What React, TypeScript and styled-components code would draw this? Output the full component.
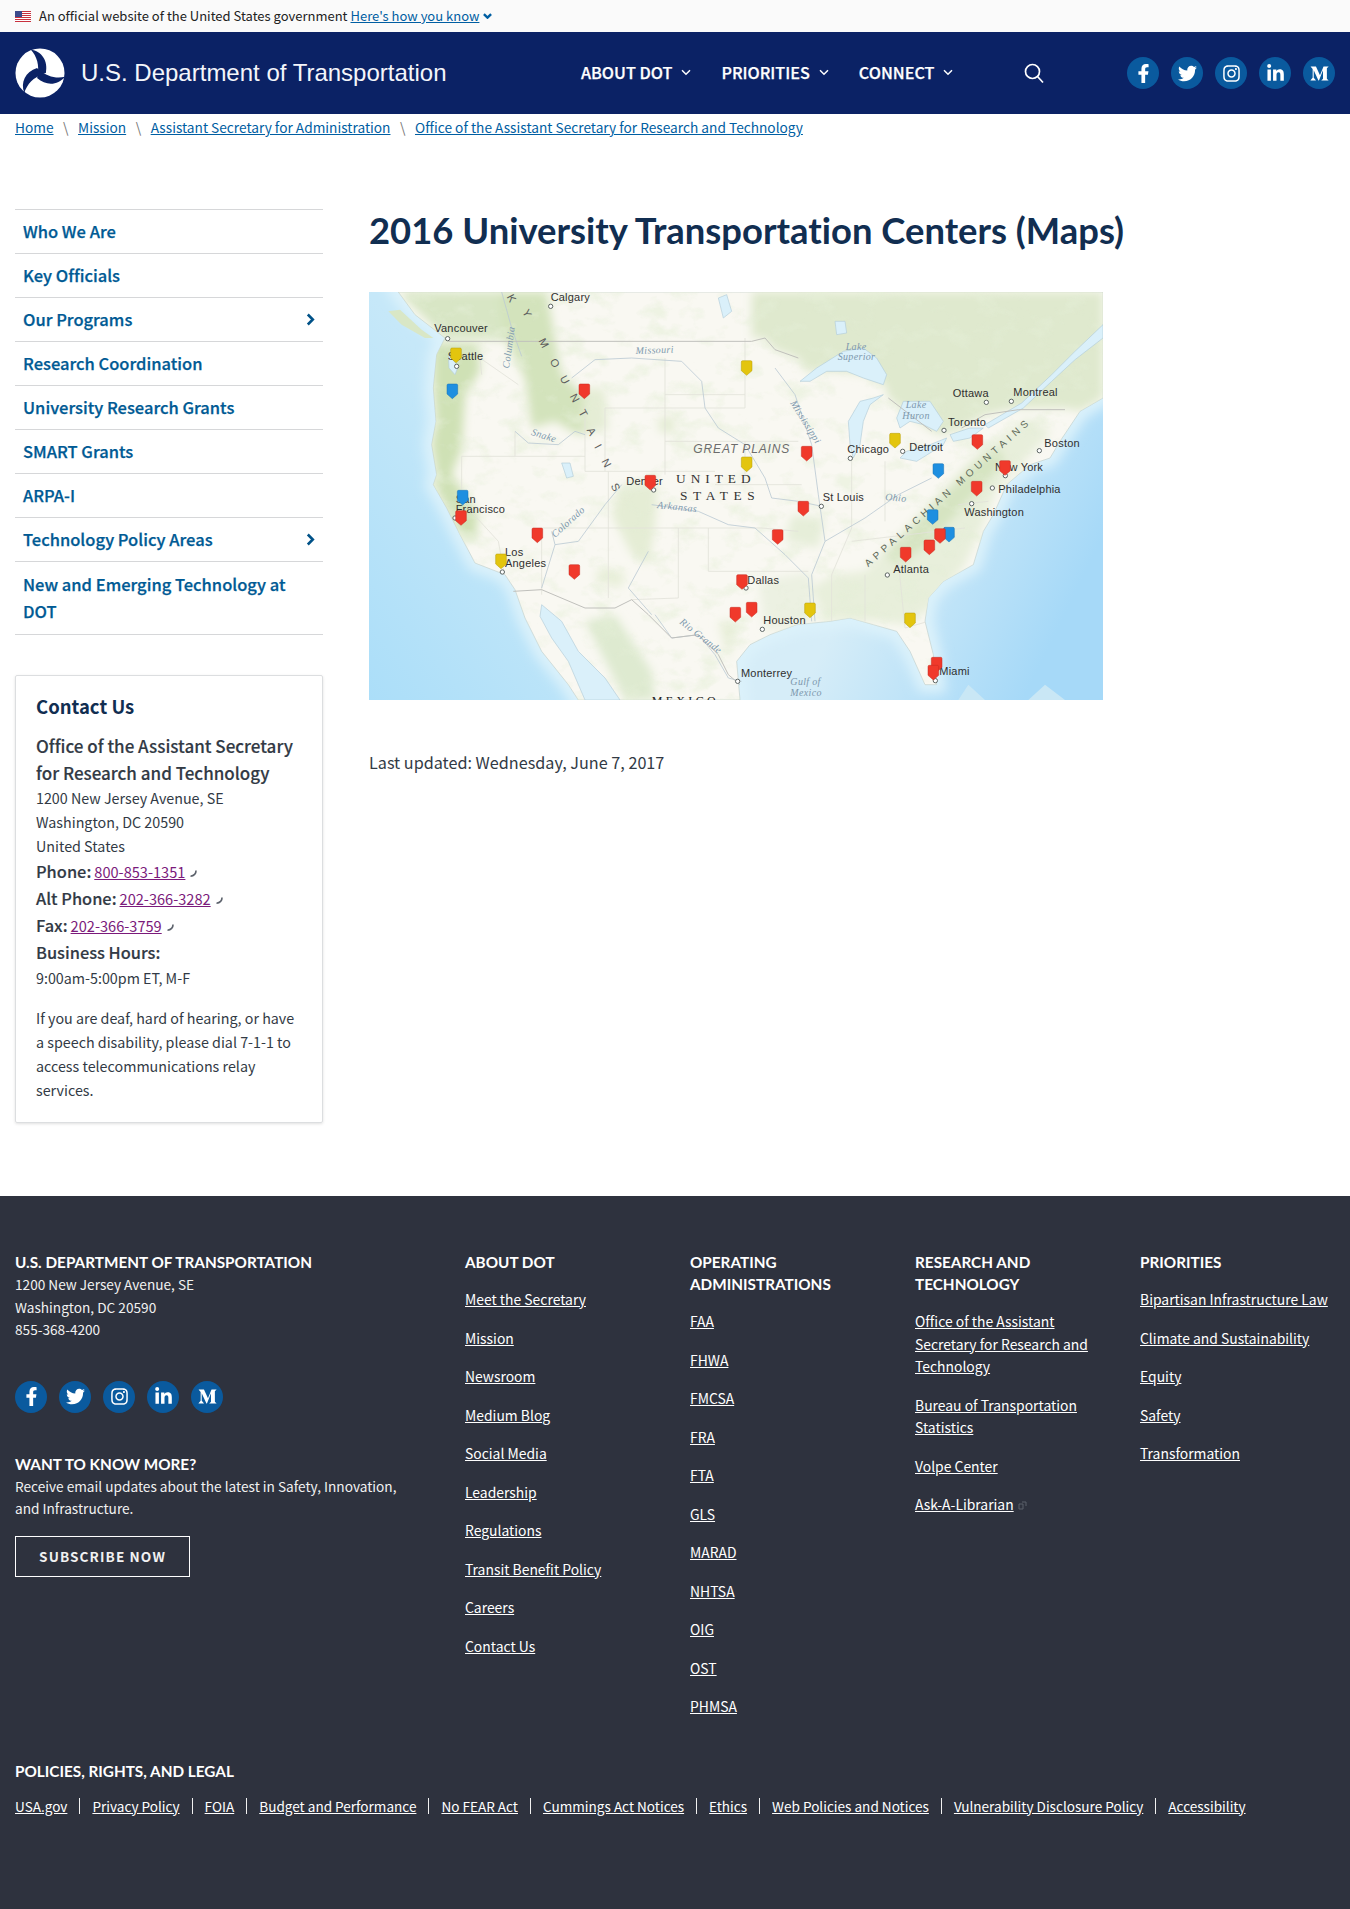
import React from "react";
import styled, { createGlobalStyle } from "styled-components";
import { FaFacebookF, FaTwitter, FaInstagram, FaLinkedinIn, FaMediumM } from "react-icons/fa";

const SANS = `"Noto Sans CJK SC", "Source Sans Pro", "Noto Sans", sans-serif`;
const LATO = `Lato, "Liberation Sans", sans-serif`;

const Global = createGlobalStyle`
  html, body { margin: 0; padding: 0; background: #fff; }
  body { font-family: ${SANS}; color: #323a45; font-variant-ligatures: none; }
  ul { margin: 0; padding: 0; list-style: none; }
  * { box-sizing: border-box; }
`;

const Banner = styled.div`
  height: 32px; background: #fafafa; display: flex; align-items: center;
  padding: 0 15px; font-size: 13px; color: #212121; gap: 8px; line-height: 32px;
`;
const BannerLink = styled.a`
  color: #005ea2; text-decoration: underline; display: inline-flex; align-items: center; gap: 4px; margin-left: -5px;
`;
const Header = styled.header`
  height: 82px; background: #0b2265; display: flex; align-items: center; padding: 0 15px; color: #fff;
`;
const Brand = styled.div`
  display: flex; align-items: center; gap: 16px; width: 566px; flex: none;
`;
const BrandName = styled.span`
  font-family: "Liberation Sans", Arial, sans-serif; font-size: 24px; white-space: nowrap; color: #f4f6fb;
`;
const Nav = styled.nav`
  display: flex; width: 442px; flex: none; gap: 30px; align-items: center; padding-bottom: 2px;
`;
const NavItem = styled.a`
  font-size: 16.2px; font-weight: 500; -webkit-text-stroke: 0.25px #fff; text-transform: uppercase; color: #fff; display: inline-flex; align-items: center; gap: 9px; white-space: nowrap;
`;
const SearchBox = styled.div`
  width: 104px; flex: none; display: flex;
`;
const SocialRow = styled.div`
  display: flex; gap: 12px;
`;
const SocialBtn = styled.a`
  width: 32px; height: 32px; border-radius: 50%; background: #0a5a9e; color: #fff; display: flex; align-items: center; justify-content: center; font-size: 19px;
`;
const Crumbs = styled.div`
  height: 27px; padding: 0 15px; display: flex; align-items: center; font-size: 13.7px; line-height: 27px;
`;
const CrumbLink = styled.a`
  color: #005ea2; text-decoration: underline;
`;
const CrumbSep = styled.span`
  color: #777; margin: 0 9.5px; font-size: 14px;
`;
const Layout = styled.div`
  display: flex; padding: 68px 15px 0; align-items: flex-start;
`;
const Side = styled.aside`
  width: 308px; flex: none;
`;
const SideList = styled.ul`
  border-bottom: 1px solid #d6d7d9;
`;
const SideItem = styled.li<{ $tall?: boolean }>`
  border-top: 1px solid #d6d7d9; min-height: ${(p) => (p.$tall ? "73px" : "44px")}; display: flex; align-items: center; justify-content: space-between;
  padding: 0 8px; font-size: 16.5px; font-weight: 500; -webkit-text-stroke: 0.25px #005a94; line-height: 27px; color: #005a94;
`;
const Card = styled.div`
  margin-top: 40px; border: 1px solid #dcdee0; border-radius: 2px; box-shadow: 0 1px 3px rgba(0, 0, 0, 0.12); padding: 17px 20px 18px; height: 448px;
`;
const CardTitle = styled.h3`
  margin: 0 0 13px; font-size: 18.5px; line-height: 26px; font-weight: 700; color: #112e51;
`;
const CardOrg = styled.div`
  font-size: 17px; line-height: 27px; font-weight: 500; -webkit-text-stroke: 0.15px #323a45;
`;
const CardText = styled.div`
  font-size: 14.3px; line-height: 24px;
`;
const CardLine = styled.div`
  font-size: 16.4px; line-height: 27px; font-weight: 500; -webkit-text-stroke: 0.15px #323a45; white-space: nowrap; display: flex; align-items: baseline; gap: 3px;
`;
const Phone = styled.a`
  font-size: 14.6px; font-weight: 400; -webkit-text-stroke: 0; color: #7b1a7b; text-decoration: underline;
`;
const CardNote = styled.p`
  margin: 16px 0 0; font-size: 14.3px; line-height: 24px;
`;
const Main = styled.main`
  margin-left: 46px; flex: 1; min-width: 0;
`;
const Title = styled.h1`
  margin: 0; font-family: ${LATO}; font-weight: 700; font-size: 36.4px; line-height: 42px; color: #112e51; white-space: nowrap;
`;
const MapFrame = styled.svg`
  display: block; width: 734px; height: 408px; margin-top: 41px;
`;
const Updated = styled.p`
  margin: 49px 0 0; font-size: 16.2px; line-height: 27px; color: #323a45;
`;
const Footer = styled.footer`
  margin-top: 73px; background: #2e323e; color: #f1f1f1; padding: 55px 15px 95px;
`;
const FooterCols = styled.div`
  display: flex; align-items: flex-start;
`;
const FooterLead = styled.div`
  width: 450px; flex: none; font-size: 13.65px; line-height: 22.5px;
`;
const FooterCol = styled.div`
  width: 225px; flex: none; padding-right: 28px; font-size: 13.9px; line-height: 22.5px;
`;
const FooterHead = styled.h4`
  margin: 0; font-family: ${LATO}; font-weight: 700; font-size: 15.3px; line-height: 22px; color: #fff; text-transform: uppercase;
`;
const FooterSocial = styled(SocialRow)`
  margin-top: 40px;
`;
const WantHead = styled(FooterHead)`
  margin-top: 40px;
`;
const WantText = styled.div`
  width: 400px;
`;
const Subscribe = styled.a`
  display: flex; width: 175px; height: 41px; margin-top: 16px; border: 1px solid #fff; align-items: center; justify-content: center;
  font-weight: 700; font-size: 13.6px; letter-spacing: 1.1px; color: #f1f1f1; text-transform: uppercase;
`;
const LinkList = styled.ul`
  margin-top: 15px;
`;
const LinkItem = styled.li`
  margin-bottom: 16px;
`;
const FootLink = styled.a`
  color: #fff; text-decoration: underline;
`;
const Legal = styled.div`
  margin-top: 26px;
`;
const LegalRow = styled.ul`
  display: flex; margin-top: 13px; font-size: 13.57px; line-height: 22px;
`;
const LegalItem = styled.li`
  padding-right: 12px; margin-right: 12px; border-right: 1px solid #f1f1f1; line-height: 16px; height: 16px; margin-top: 3px; white-space: nowrap;
  &:last-child { border-right: none; }
`;

/* ---------- small drawings ---------- */
const Flag = () => (
  <svg width="16" height="11" viewBox="0 0 16 11" aria-hidden>
    <rect width="16" height="11" fill="#fff" />
    {[0, 2, 4, 6, 8, 10].map((y) => (
      <rect key={y} y={y} width="16" height="1" fill="#c8313e" />
    ))}
    <rect width="7" height="6" fill="#3c4a8c" />
  </svg>
);
const SmallChevron = ({ color = "#fff", size = 10, width = 1.5 }: { color?: string; size?: number; width?: number }) => (
  <svg width={size} height={size * 0.7} viewBox="0 0 10 7" aria-hidden>
    <path d="M1 1.2 L5 5.2 L9 1.2" fill="none" stroke={color} strokeWidth={width} />
  </svg>
);
const SideChevron = () => (
  <svg width="9" height="13" viewBox="0 0 9 13" aria-hidden>
    <path d="M1.8 1.5 L6.8 6.5 L1.8 11.5" fill="none" stroke="#005288" strokeWidth="2.6" />
  </svg>
);
const PhoneGlyph = () => (
  <svg width="9" height="9" viewBox="0 0 9 9" aria-hidden style={{ marginLeft: 1 }}>
    <path d="M7 1.5 C7.2 4.5 5 7 1.5 7.2" fill="none" stroke="#5b616b" strokeWidth="1.6" />
  </svg>
);
const ExternalGlyph = () => (
  <svg width="9" height="9" viewBox="0 0 9 9" aria-hidden style={{ marginLeft: 4 }}>
    <path d="M1 3 H5 V8 H1 Z M4 1 H8 V5" fill="none" stroke="#5b616b" strokeWidth="1" />
  </svg>
);
const SearchGlyph = () => (
  <svg width="22" height="22" viewBox="0 0 22 22" aria-hidden>
    <circle cx="9.5" cy="9.5" r="7" fill="none" stroke="#fff" strokeWidth="1.7" />
    <path d="M14.5 14.5 L20 20.5" stroke="#fff" strokeWidth="1.7" />
  </svg>
);
const Logo = () => (
  <svg width="50" height="50" viewBox="-102 -102 204 204" aria-hidden>
    <circle r="100" fill="#fff" />
    {[0, 120, 240].map((a) => (
      <path key={a} transform={`rotate(${a})`} d="M-38,-96 C8,-88 34,-50 24,0 L-10,8 C-2,-30 -12,-68 -38,-96 Z" fill="#0b2265" />
    ))}
  </svg>
);
const Socials = () => (
  <>
    <SocialBtn><FaFacebookF /></SocialBtn>
    <SocialBtn><FaTwitter /></SocialBtn>
    <SocialBtn><FaInstagram /></SocialBtn>
    <SocialBtn><FaLinkedinIn /></SocialBtn>
    <SocialBtn><FaMediumM /></SocialBtn>
  </>
);

/* ---------- map ---------- */
const LAND =
  "M100,12 L150,80 L240,150 L215,200 L205,300 L213,400 L200,470 L215,560 L205,590 L245,660 L285,740 L330,825 L420,860 L450,905 L480,990 L530,1090 L610,1190 L640,1236 L1125,1236 L1115,1120 L1155,1070 L1215,1040 L1295,1010 L1395,1000 L1455,990 L1525,1010 L1595,1030 L1635,1090 L1680,1190 L1715,1190 L1705,1100 L1680,1000 L1690,930 L1735,880 L1825,830 L1855,730 L1885,680 L1925,590 L1995,530 L2055,510 L2085,460 L2145,370 L2214,330 L2214,12 Z";

type Pin = [number, number, "r" | "y" | "b"];
const PINS: Pin[] = [
  [273, 180, "y"], [262, 288, "b"], [658, 288, "r"], [293, 607, "b"], [288, 668, "r"], [517, 720, "r"], [408, 798, "y"], [628, 830, "r"],
  [856, 562, "r"], [1131, 860, "r"], [1111, 958, "r"], [1160, 943, "r"], [1145, 218, "y"], [1145, 507, "y"], [1325, 475, "r"], [1315, 640, "r"],
  [1238, 725, "r"], [1335, 945, "y"], [1590, 436, "y"], [1635, 975, "y"], [1720, 527, "b"], [1703, 665, "b"], [1752, 718, "b"], [1725, 722, "r"],
  [1693, 756, "r"], [1622, 778, "r"], [1837, 440, "r"], [1920, 518, "r"], [1835, 580, "r"], [1715, 1108, "r"], [1705, 1132, "r"],
];
const PIN_COL = { r: ["#f0392b", "#c42a20"], y: ["#e3c50e", "#b59c08"], b: ["#1e8fe0", "#1670b5"] };

const CITIES: [string, number, number, number, number][] = [
  ["Calgary", 557, 40, 557, 55], ["Vancouver", 208, 132, 248, 152], ["Seattle", 248, 217, 275, 235], ["San", 272, 645, 270, 690],
  ["Denver", 784, 590, 866, 606], ["Angeles", 420, 836, 412, 852], ["Monterrey", 1128, 1167, 1118, 1180], ["Dallas", 1147, 888, 1143, 900],
  ["Houston", 1195, 1007, 1192, 1024], ["St Louis", 1373, 638, 1369, 655], ["Chicago", 1447, 495, 1456, 511], ["Detroit", 1633, 490, 1613, 490],
  ["Ottawa", 1763, 326, 1864, 343], ["Montreal", 1945, 323, 1939, 340], ["Toronto", 1749, 413, 1737, 427], ["Boston", 2038, 476, 2023, 488],
  ["New York", 1890, 548, 1921, 563], ["Philadelphia", 1900, 614, 1882, 600], ["Washington", 1798, 683, 1820, 647], ["Atlanta", 1585, 855, 1567, 861],
  ["Miami", 1723, 1160, 1711, 1178],
];
const ROCKY: [string, number, number][] = [
  ["K", 440, 30], ["Y", 487, 75], ["M", 537, 165], ["O", 570, 225], ["U", 600, 275], ["N", 630, 330], ["T", 655, 375], ["A", 680, 430], ["I", 700, 475], ["N", 725, 525], ["S", 752, 597],
];
const RIVERS: [string, number, number, number][] = [
  ["Missouri", 812, 198, -2], ["Snake", 497, 440, 18], ["Columbia", 432, 242, -82], ["Colorado", 570, 750, -42], ["Arkansas", 876, 660, 6],
  ["Rio Grande", 942, 1005, 38], ["Mississippi", 1275, 345, 58], ["Ohio", 1560, 636, 5],
];
const WATER_LABELS: [string, number, number][] = [
  ["Lake", 1442, 186], ["Superior", 1418, 216], ["Lake", 1622, 360], ["Huron", 1612, 392], ["Gulf of", 1276, 1192], ["Mexico", 1276, 1224],
];
const BORDERS = [
  "M250,160 L1160,160 L1200,150 L1230,185 L1300,210",
  "M1570,330 L1700,430 M1790,420 L1860,380 L1960,365 L2100,365",
  "M445,910 L530,905 L660,960 L750,960 L800,935 L850,980 L920,1050 L1000,1040 L1060,1100 L1090,1160 L1125,1190",
];
const STATES =
  "M350,260 L345,210 L460,290 M450,430 L450,505 L290,505 M290,505 L290,640 L400,760 L420,870 M450,505 L660,505 M660,355 L660,550 L720,550 L720,360 M720,360 L1140,360 M900,210 L900,560 M720,550 L1050,550 M1140,150 L1140,360 M900,320 L1140,320 M900,460 L1300,460 M1140,460 L1140,560 M730,720 L1190,720 L1300,730 M730,550 L730,930 M530,720 L730,720 M530,720 L530,920 M940,720 L940,930 L800,935 M1030,720 L1030,850 L1330,850 M1310,590 L1050,590 M1460,510 L1460,720 L1400,860 M1560,520 L1560,700 M1460,760 L1800,720 M1400,860 L1400,1000 M1500,860 L1500,1000 M1600,820 L1620,1020 M1620,1020 L1690,1000 M1780,650 L1870,640";
const LINES = [
  "M620,270 L690,215 L800,210 L950,220 L1010,280 L1020,360 L1060,420 L1140,470 L1200,570 L1220,630 L1300,640 L1370,655",
  "M450,430 L490,465 L580,470 L630,430 L660,440",
  "M470,205 L440,120 L410,12",
  "M770,590 L720,650 L640,760 L570,770 L560,730 M570,770 L530,900",
  "M860,650 L1000,670 L1090,710 L1170,720 L1260,800 L1330,870 L1340,1000",
  "M850,790 L790,900 L860,980",
  "M870,980 L920,1050 L1000,1040 L1050,1100 L1090,1170 L1130,1180",
  "M1230,240 L1290,320 L1340,470 L1360,620 L1380,760 L1340,860 L1350,1000",
  "M1380,760 L1500,690 L1600,620 L1700,570",
];

const MapDrawing = () => (
  <MapFrame viewBox="12 12 2202 1224" preserveAspectRatio="none" role="img" aria-label="Map of 2016 University Transportation Centers">
    <defs>
      <linearGradient id="oceanW" x1="0" x2="1" y1="1" y2="0">
        <stop offset="0" stopColor="#abdef9" />
        <stop offset="0.5" stopColor="#c6e8f9" />
      </linearGradient>
      <linearGradient id="oceanE" x1="0" x2="1" y1="0.1" y2="0.6">
        <stop offset="0.55" stopColor="#d6edf8" />
        <stop offset="1" stopColor="#a6d9f8" />
      </linearGradient>
      <filter id="soft" x="-5%" y="-5%" width="110%" height="110%">
        <feGaussianBlur stdDeviation="14" />
      </filter>
      <filter id="softer" x="-5%" y="-5%" width="110%" height="110%">
        <feGaussianBlur stdDeviation="18" />
      </filter>
      <filter id="mottle" x="0" y="0" width="100%" height="100%">
        <feTurbulence type="fractalNoise" baseFrequency="0.012 0.018" numOctaves="4" seed="7" />
        <feColorMatrix type="matrix" values="0 0 0 0 0.78  0 0 0 0 0.86  0 0 0 0 0.68  3.4 0 0 0 -1.75" />
      </filter>
      <clipPath id="landClip">
        <path d={LAND} />
      </clipPath>
    </defs>
    <rect x="12" y="12" width="1000" height="1224" fill="url(#oceanW)" />
    <rect x="1012" y="12" width="1202" height="1224" fill="url(#oceanE)" />
    <path d={LAND} fill="none" stroke="#dcf2fb" strokeWidth="50" filter="url(#softer)" />
    <path d={LAND} fill="#f9f8f2" stroke="#c2d0cc" strokeWidth="2" />
    <path d="M70,70 L105,65 L170,125 L205,150 L180,150 L110,110 Z" fill="#d9e7c6" />
    <path d="M1990,1236 L2040,1190 L2100,1236 Z M1780,1236 L1810,1190 L1860,1236 Z" fill="#c9e7f5" />
    <g clipPath="url(#landClip)">
      <g filter="url(#soft)">
        <path d="M100,12 L545,12 L545,160 L240,150 Z" fill="#d8e6c5" />
        <path d="M1160,12 L1160,150 L1200,150 L1230,185 L1300,210 L1320,250 L1420,250 L1500,260 L1560,290 L1570,330 L1700,430 L1735,440 L1790,420 L1860,380 L1960,360 L2100,360 L2145,370 L2214,330 L2214,12 Z" fill="#dfe9ce" />
        <path d="M400,12 L545,12 L590,260 L680,340 L720,420 L640,440 L570,400 L500,420 L480,270 L420,150 Z" fill="#d3e3bc" />
        <path d="M205,165 L340,170 L345,250 L300,320 L290,480 L260,560 L340,680 L330,760 L285,740 L245,660 L205,590 L215,560 L200,470 L213,400 L205,300 Z" fill="#cfe1b5" />
        <path d="M760,600 L880,580 L870,720 L850,830 L800,800 L740,680 Z" fill="#e5edd5" />
        <path d="M660,300 L720,300 L730,430 L650,420 Z M880,390 L930,380 L930,440 L880,430 Z" fill="#e5edd5" />
        <path d="M700,840 L780,850 L770,900 L690,880 Z M1060,1000 L1120,1000 L1090,1120 Z" fill="#e8efd9" />
        <path d="M660,1000 L750,980 L860,1150 L870,1236 L780,1236 Z" fill="#deead0" />
        <path d="M1280,680 L1380,690 L1360,780 L1260,760 Z" fill="#e6eed9" />
        <path d="M1180,880 L1340,850 L1340,1000 L1200,1030 Z" fill="#ecf1e2" />
        <path d="M1500,850 L1700,640 L1850,480 L1990,390 L2060,430 L1980,520 L1900,590 L1850,720 L1800,830 L1700,960 L1620,1010 L1530,1000 L1380,1000 L1340,900 L1400,860 Z" fill="#e8efdb" />
        <path d="M1560,800 L1720,640 L1830,530 L1900,480 L1920,520 L1800,650 L1700,760 L1600,830 Z" fill="#d6e4c1" />
      </g>
      <rect x="12" y="12" width="2202" height="1224" filter="url(#mottle)" opacity="0.55" />
      <path d={STATES} fill="none" stroke="#e2e2da" strokeWidth="2.5" />
    </g>
    <g fill="#daf0fa" stroke="#b4cdda" strokeWidth="2">
      <path d="M525,985 L530,950 L590,1000 L640,1090 L720,1170 L765,1236 L660,1236 L610,1120 L560,1050 Z" />
      <path d="M1305,280 L1355,240 L1435,190 L1495,180 L1535,210 L1565,260 L1555,290 L1495,270 L1445,250 L1385,250 L1335,280 Z" />
      <path d="M1455,470 L1450,400 L1485,340 L1525,330 L1555,320 L1515,350 L1495,400 L1485,470 L1465,510 Z" />
      <path d="M1605,420 L1595,390 L1615,340 L1695,340 L1735,400 L1715,430 L1675,410 L1635,400 Z" />
      <path d="M1605,510 L1655,520 L1735,470 L1745,450 L1695,470 L1625,490 Z" />
      <path d="M1755,440 L1815,420 L1855,420 L1815,450 L1765,460 Z" />
      <path d="M1860,410 L1970,345 L2060,260 L2130,190 L2214,110 L2214,150 L2130,215 L2060,280 L1975,360 L1870,420 Z" />
      <path d="M590,525 L615,525 L625,565 L605,570 Z M250,200 L280,235 L270,260 L252,240 Z" />
      <path d="M1060,30 L1085,20 L1100,70 L1075,90 Z M1410,100 L1440,100 L1445,135 L1415,140 Z" />
    </g>
    <g fill="none" stroke="#bccad4" strokeWidth="2.5">
      {LINES.map((d) => (
        <path key={d} d={d} />
      ))}
    </g>
    <g fill="none" stroke="#c0c0bc" strokeWidth="3">
      {BORDERS.map((d) => (
        <path key={d} d={d} />
      ))}
    </g>
    <g fontFamily='"Liberation Serif", serif' fontStyle="italic" fontSize="30" fill="#7d98ad">
      {RIVERS.map(([t, x, y, r]) => (
        <text key={t} x={x} y={y} transform={`rotate(${r} ${x} ${y})`} letterSpacing="1">{t}</text>
      ))}
      {WATER_LABELS.map(([t, x, y]) => (
        <text key={t + y} x={x} y={y} letterSpacing="1">{t}</text>
      ))}
    </g>
    <g fontFamily='"Liberation Sans", sans-serif' fontSize="33" fill="#5b5b5b" textAnchor="middle">
      {ROCKY.map(([t, x, y]) => (
        <text key={t + x} x={x} y={y + 12} transform={`rotate(62 ${x} ${y})`}>{t}</text>
      ))}
    </g>
    <path id="appPath" d="M1510,838 L2040,368" fill="none" />
    <text fontFamily='"Liberation Sans", sans-serif' fontSize="30" fill="#5f6a5a" letterSpacing="12.5">
      <textPath href="#appPath">APPALACHIAN MOUNTAINS</textPath>
    </text>
    <text x="985" y="495" fontFamily='"Liberation Sans", sans-serif' fontStyle="italic" fontSize="36" letterSpacing="2.6" fill="#6c6c6c">GREAT PLAINS</text>
    <g fontFamily='"Liberation Serif", serif' fontSize="40" fill="#333">
      <text x="933" y="585" letterSpacing="15">UNITED</text>
      <text x="945" y="636" letterSpacing="17">STATES</text>
    </g>
    <text x="860" y="1250" fontFamily='"Liberation Serif", serif' fontSize="36" letterSpacing="10" fill="#222">MEXICO</text>
    <g fontFamily='"Liberation Sans", sans-serif' fontSize="33" fill="#2f2f2f" letterSpacing="0.6">
      {CITIES.map(([t, x, y, cx, cy]) => (
        <React.Fragment key={t}>
          <circle cx={cx} cy={cy} r="6.5" fill="#fff" stroke="#5d6563" strokeWidth="3" />
          <text x={x} y={y}>{t}</text>
        </React.Fragment>
      ))}
      <text x="272" y="675">Francisco</text>
      <text x="420" y="805">Los</text>
    </g>
    {PINS.map(([x, y, c]) => (
      <path
        key={`${x}-${y}`}
        d={`M${x - 16},${y + 4} Q${x - 16},${y} ${x - 12},${y} L${x + 12},${y} Q${x + 16},${y} ${x + 16},${y + 4} L${x + 16},${y + 30} L${x},${y + 44} L${x - 16},${y + 30} Z`}
        fill={PIN_COL[c][0]}
        stroke={PIN_COL[c][1]}
        strokeWidth="1.5"
      />
    ))}
  </MapFrame>
);

/* ---------- data ---------- */
const SIDE: [string, boolean?][] = [
  ["Who We Are"], ["Key Officials"], ["Our Programs", true], ["Research Coordination"], ["University Research Grants"], ["SMART Grants"], ["ARPA-I"], ["Technology Policy Areas", true],
];
const ABOUT = ["Meet the Secretary", "Mission", "Newsroom", "Medium Blog", "Social Media", "Leadership", "Regulations", "Transit Benefit Policy", "Careers", "Contact Us"];
const OPS = ["FAA", "FHWA", "FMCSA", "FRA", "FTA", "GLS", "MARAD", "NHTSA", "OIG", "OST", "PHMSA"];
const RESEARCH = ["Office of the Assistant Secretary for Research and Technology", "Bureau of Transportation Statistics", "Volpe Center"];
const PRIORITIES = ["Bipartisan Infrastructure Law", "Climate and Sustainability", "Equity", "Safety", "Transformation"];
const LEGAL = ["USA.gov", "Privacy Policy", "FOIA", "Budget and Performance", "No FEAR Act", "Cummings Act Notices", "Ethics", "Web Policies and Notices", "Vulnerability Disclosure Policy", "Accessibility"];
const CRUMBS = ["Home", "Mission", "Assistant Secretary for Administration", "Office of the Assistant Secretary for Research and Technology"];

const Links = ({ items }: { items: string[] }) => (
  <LinkList>
    {items.map((t) => (
      <LinkItem key={t}><FootLink>{t}</FootLink></LinkItem>
    ))}
  </LinkList>
);

export default function App() {
  return (
    <>
      <Global />
      <Banner>
        <Flag />
        <span>An official website of the United States government</span>
        <BannerLink>Here's how you know <SmallChevron color="#005ea2" size={9} width={2.6} /></BannerLink>
      </Banner>
      <Header>
        <Brand>
          <Logo />
          <BrandName>U.S. Department of Transportation</BrandName>
        </Brand>
        <Nav>
          <NavItem>About DOT <SmallChevron /></NavItem>
          <NavItem>Priorities <SmallChevron /></NavItem>
          <NavItem>Connect <SmallChevron /></NavItem>
        </Nav>
        <SearchBox><SearchGlyph /></SearchBox>
        <SocialRow><Socials /></SocialRow>
      </Header>
      <Crumbs>
        {CRUMBS.map((c, i) => (
          <React.Fragment key={c}>
            {i > 0 && <CrumbSep>\</CrumbSep>}
            <CrumbLink>{c}</CrumbLink>
          </React.Fragment>
        ))}
      </Crumbs>
      <Layout>
        <Side>
          <SideList>
            {SIDE.map(([t, more]) => (
              <SideItem key={t}>{t}{more && <SideChevron />}</SideItem>
            ))}
            <SideItem $tall>New and Emerging Technology at DOT</SideItem>
          </SideList>
          <Card>
            <CardTitle>Contact Us</CardTitle>
            <CardOrg>Office of the Assistant Secretary for Research and Technology</CardOrg>
            <CardText>1200 New Jersey Avenue, SE<br />Washington, DC 20590<br />United States</CardText>
            <CardLine>Phone: <Phone>800-853-1351</Phone><PhoneGlyph /></CardLine>
            <CardLine>Alt Phone: <Phone>202-366-3282</Phone><PhoneGlyph /></CardLine>
            <CardLine>Fax: <Phone>202-366-3759</Phone><PhoneGlyph /></CardLine>
            <CardLine>Business Hours:</CardLine>
            <CardText>9:00am-5:00pm ET, M-F</CardText>
            <CardNote>If you are deaf, hard of hearing, or have a speech disability, please dial 7-1-1 to access telecommunications relay services.</CardNote>
          </Card>
        </Side>
        <Main>
          <Title>2016 University Transportation Centers (Maps)</Title>
          <MapDrawing />
          <Updated>Last updated: Wednesday, June 7, 2017</Updated>
        </Main>
      </Layout>
      <Footer>
        <FooterCols>
          <FooterLead>
            <FooterHead>U.S. Department of Transportation</FooterHead>
            <div>1200 New Jersey Avenue, SE<br />Washington, DC 20590<br />855-368-4200</div>
            <FooterSocial><Socials /></FooterSocial>
            <WantHead>Want to know more?</WantHead>
            <WantText>Receive email updates about the latest in Safety, Innovation, and Infrastructure.</WantText>
            <Subscribe>Subscribe Now</Subscribe>
          </FooterLead>
          <FooterCol>
            <FooterHead>About DOT</FooterHead>
            <Links items={ABOUT} />
          </FooterCol>
          <FooterCol>
            <FooterHead>Operating Administrations</FooterHead>
            <Links items={OPS} />
          </FooterCol>
          <FooterCol>
            <FooterHead>Research and Technology</FooterHead>
            <LinkList>
              {RESEARCH.map((t) => (
                <LinkItem key={t}><FootLink>{t}</FootLink></LinkItem>
              ))}
              <LinkItem><FootLink>Ask-A-Librarian</FootLink><ExternalGlyph /></LinkItem>
            </LinkList>
          </FooterCol>
          <FooterCol>
            <FooterHead>Priorities</FooterHead>
            <Links items={PRIORITIES} />
          </FooterCol>
        </FooterCols>
        <Legal>
          <FooterHead>Policies, Rights, and Legal</FooterHead>
          <LegalRow>
            {LEGAL.map((t) => (
              <LegalItem key={t}><FootLink>{t}</FootLink></LegalItem>
            ))}
          </LegalRow>
        </Legal>
      </Footer>
    </>
  );
}
